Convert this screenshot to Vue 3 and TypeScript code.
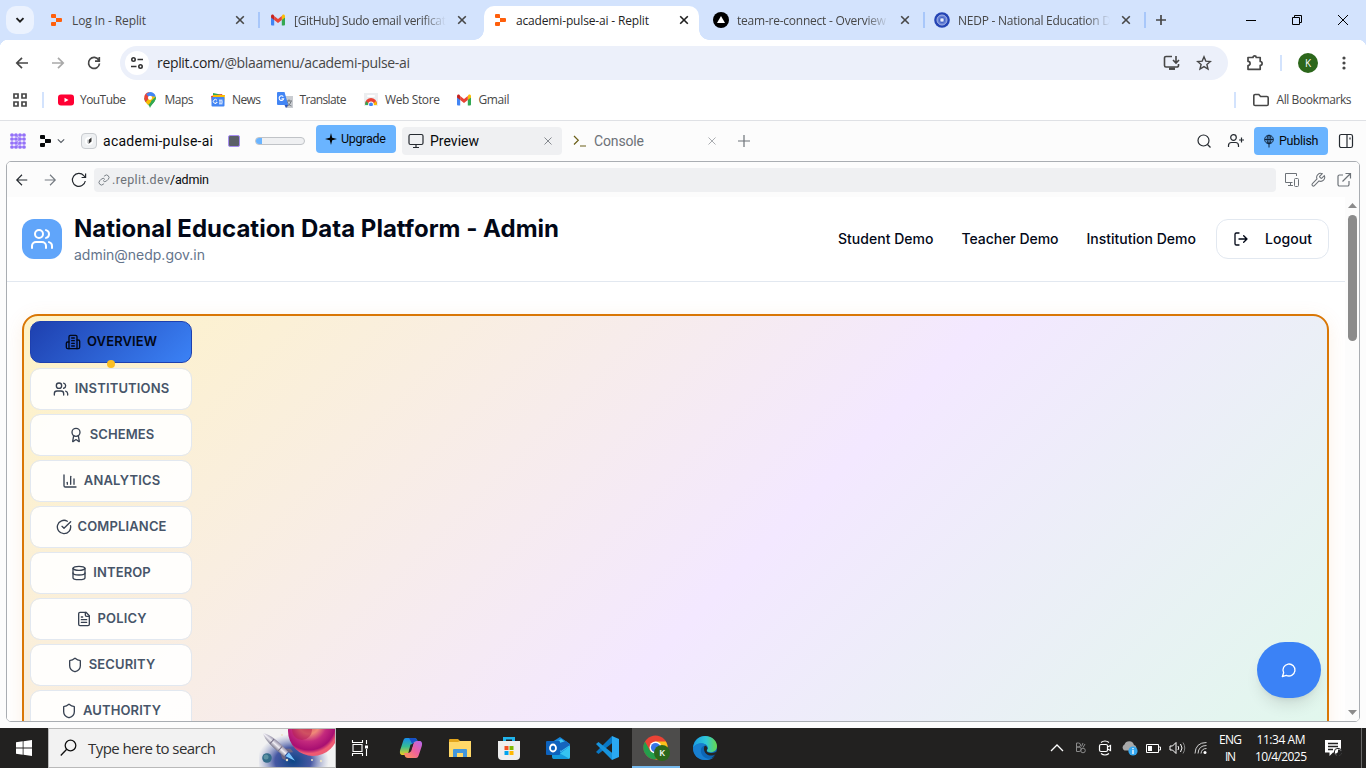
<script setup lang="ts">
import type { Directive } from 'vue'

// Tracks a label out (or in) so that its glyph run spans the given width.
const vFit: Directive<HTMLElement, number> = {
  mounted(el, binding) {
    const count = (el.textContent ?? '').trim().length
    const natural = el.getBoundingClientRect().width
    const spacing = (binding.value - natural) / (count - 1)
    el.style.letterSpacing = `${spacing}px`
    el.style.marginRight = `${-spacing}px`
  },
}

interface Tab { title: string; width: number; icon: string; active?: boolean; separator?: boolean; faded?: boolean }
const tabs: Tab[] = [
  { title: 'Log In - Replit', width: 74, icon: 'replit', separator: true },
  { title: '[GitHub] Sudo email verificat', width: 152, icon: 'gmail', faded: true },
  { title: 'academi-pulse-ai - Replit', width: 133, icon: 'replit', active: true },
  { title: 'team-re-connect - Overview', width: 149, icon: 'vercel', separator: true, faded: true },
  { title: 'NEDP - National Education D', width: 153, icon: 'nedp', separator: true, faded: true },
]

interface Bookmark { label: string; width: number; icon: string }
const bookmarks: Bookmark[] = [
  { label: 'YouTube', width: 46, icon: 'youtube' },
  { label: 'Maps', width: 29, icon: 'maps' },
  { label: 'News', width: 29, icon: 'news' },
  { label: 'Translate', width: 47, icon: 'translate' },
  { label: 'Web Store', width: 55, icon: 'store' },
  { label: 'Gmail', width: 31, icon: 'gmail' },
]

const users = [
  'M16 21v-2a4 4 0 0 0-4-4H6a4 4 0 0 0-4 4v2',
  'M22 21v-2a4 4 0 0 0-3-3.87',
  'M16 3.13a4 4 0 0 1 0 7.75',
  'M13 7a4 4 0 1 1-8 0a4 4 0 1 1 8 0',
]
const shield = [
  'M20 13c0 5-3.5 7.5-7.66 8.95a1 1 0 0 1-.67-.01C7.5 20.5 4 18 4 13V6a1 1 0 0 1 1-1c2 0 4.5-1.2 6.24-2.72a1.17 1.17 0 0 1 1.52 0C14.51 3.81 17 5 19 5a1 1 0 0 1 1 1z',
]

interface NavItem { label: string; width: number; paths: string[]; active?: boolean }
const navItems: NavItem[] = [
  {
    label: 'OVERVIEW', width: 70, active: true,
    paths: ['M6 22V4a2 2 0 0 1 2-2h8a2 2 0 0 1 2 2v18Z', 'M6 12H4a2 2 0 0 0-2 2v6a2 2 0 0 0 2 2h2', 'M18 9h2a2 2 0 0 1 2 2v9a2 2 0 0 1-2 2h-2', 'M10 6h4', 'M10 10h4', 'M10 14h4', 'M10 18h4'],
  },
  { label: 'INSTITUTIONS', width: 94.5, paths: users },
  {
    label: 'SCHEMES', width: 64.5,
    paths: ['m15.477 12.89 1.515 8.526a.5.5 0 0 1-.81.47l-3.58-2.687a1 1 0 0 0-1.197 0l-3.586 2.686a.5.5 0 0 1-.81-.469l1.514-8.526', 'M18 8a6 6 0 1 1-12 0a6 6 0 1 1 12 0'],
  },
  { label: 'ANALYTICS', width: 76.5, paths: ['M3 3v16a2 2 0 0 0 2 2h16', 'M18 17V9', 'M13 17V5', 'M8 17v-3'] },
  { label: 'COMPLIANCE', width: 89, paths: ['M21.801 10A10 10 0 1 1 17 3.335', 'm9 11 3 3L22 4'] },
  { label: 'INTEROP', width: 57.5, paths: ['M21 5a9 3 0 1 1-18 0a9 3 0 1 1 18 0', 'M3 5V19A9 3 0 0 0 21 19V5', 'M3 12A9 3 0 0 0 21 12'] },
  { label: 'POLICY', width: 49, paths: ['M15 2H6a2 2 0 0 0-2 2v16a2 2 0 0 0 2 2h12a2 2 0 0 0 2-2V7Z', 'M14 2v4a2 2 0 0 0 2 2h4', 'M10 9H8', 'M16 13H8', 'M16 17H8'] },
  { label: 'SECURITY', width: 66.5, paths: shield },
  { label: 'AUTHORITY', width: 78, paths: shield },
]

const demoLinks = [
  { label: 'Student Demo', width: 95.5 },
  { label: 'Teacher Demo', width: 97 },
  { label: 'Institution Demo', width: 109.5 },
]

const waffle = [0, 1, 2, 3].flatMap(row => [0, 1, 2, 3].map(col => ({ x: 2 + col * 4, y: 2 + row * 4 })))
</script>

<template>
  <div class="screen">
    <svg class="defs" width="0" height="0">
      <defs>
        <symbol id="replit" viewBox="0 0 16 16">
          <path d="M4 2h3a1 1 0 0 1 1 1v3H4a1 1 0 0 1-1-1V3a1 1 0 0 1 1-1zM8 6h5a1 1 0 0 1 1 1v2a1 1 0 0 1-1 1H8zM4 10h4v3a1 1 0 0 1-1 1H4a1 1 0 0 1-1-1v-2a1 1 0 0 1 1-1z" fill="currentColor" />
        </symbol>
        <symbol id="gmail" viewBox="0 0 16 16">
          <path d="M1 5v7.5a1 1 0 0 0 1 1h2.2V7z" fill="#4285f4" />
          <path d="M15 5v7.5a1 1 0 0 1-1 1h-2.2V7z" fill="#34a853" />
          <path d="M11.8 4v4L15 5.600V4.300c0-1.500-1.500-2.200-2.600-1.300z" fill="#fbbc04" />
          <path d="M4.200 8V4L8 6.900 11.800 4v4L8 10.900z" fill="#ea4335" />
          <path d="M1 4.300v1.300L4.200 8V4l-.6-1C2.500 2.100 1 2.800 1 4.300z" fill="#c5221f" />
        </symbol>
        <symbol id="vercel" viewBox="0 0 16 16">
          <circle cx="8" cy="8" r="8" /><path d="M8 4l4 7H4z" fill="#fff" />
        </symbol>
        <symbol id="nedp" viewBox="0 0 16 16">
          <circle cx="8" cy="8" r="7.800" fill="#2444b4" /><circle cx="8" cy="8" r="5" fill="#6680d6" stroke="#a6b5e6" />
          <circle cx="8" cy="8" r="2.700" fill="#a9b8e8" stroke="#4363c4" /><circle cx="8" cy="8" r="1" fill="#fff" />
        </symbol>
        <symbol id="youtube" viewBox="0 0 16 16">
          <rect y="2.500" width="16" height="11" rx="3" fill="#ff0033" /><path d="M6.500 5.700v4.600L10.500 8z" fill="#fff" />
        </symbol>
        <symbol id="maps" viewBox="0 0 16 16">
          <path d="M8 16c-.7-3.500-5.800-5.500-5.800-10.200L8 5.600l5.700-1.200c1 4.900-4.500 7.600-5.700 11.600z" fill="#34a853" />
          <path d="M2.300 6C2.200 2.500 4.700.2 7.500 0L8 5.500l-4.400 4.700C2.800 8.900 2.300 7.600 2.300 6z" fill="#ea4335" />
          <path d="M8 0c2.800 0 5.100 1.800 5.700 4.400L8 6 4 2z" fill="#4285f4" />
          <path d="M3.600 10.200L9 4l4.500 1L6.300 13z" fill="#fbbc04" />
          <path d="M9 9l4.800-4.300c.7 4-3.500 6.800-5 9.300z" fill="#34a853" />
          <circle cx="8" cy="5.800" r="2.100" fill="#fff" />
        </symbol>
        <symbol id="news" viewBox="0 0 16 16">
          <path d="M3 1l10 2-1 6H3z" fill="#34a853" /><path d="M1 4l11-2 2 8H2z" fill="#ea4335" /><path d="M3 3h12l-1 8H3z" fill="#fbbc04" />
          <rect x="1.500" y="5" width="13" height="9.500" rx="1" fill="#4285f4" />
          <path d="M7 8.300a2 2 0 1 0 .2 2H5.700M9 8.200h3.500M9 10h4M9 11.800h3.500" fill="none" stroke="#fff" stroke-width="1" />
        </symbol>
        <symbol id="translate" viewBox="0 0 16 16">
          <path d="M6 4h10v12H9z" fill="#c9ccd1" /><path d="M9 9h6M12 7.500V9M10 9.500c1 3 3 4 4.500 4.500M14 9.500c-.8 2.500-2 3.700-4 4.700" stroke="#6a7076" fill="none" />
          <path d="M1 0h6.500l3.700 13H1a1 1 0 0 1-1-1V1a1 1 0 0 1 1-1z" fill="#4285f4" /><path d="M7.500 13h3.700L9 16z" fill="#3154b4" />
          <path d="M6.300 4.700a2.300 2.300 0 1 0 .4 2H4.500" stroke="#fff" fill="none" stroke-width="1.100" />
        </symbol>
        <symbol id="store" viewBox="0 0 16 16">
          <path d="M1 1h14v14H1z" fill="#eceef0" /><path d="M5 4h6" stroke="#fff" stroke-width="2" stroke-linecap="round" />
          <path d="M2 12a6 6 0 0 1 12 0z" fill="#ea4335" /><path d="M2 13l1-4 4 4z" fill="#34a853" /><path d="M14 13l-1-4-4 4z" fill="#fbbc04" />
          <circle cx="8" cy="12.300" r="2.800" fill="#fff" /><circle cx="8" cy="12.500" r="2" fill="#4285f4" /><path d="M1 14h14v2H1z" fill="#fff" />
        </symbol>
        <symbol id="close" viewBox="0 0 16 16"><path d="M4.200 4.200l7.600 7.600M11.800 4.200l-7.600 7.600" stroke="currentColor" stroke-width="1.600" /></symbol>
        <symbol id="thin-close" viewBox="0 0 16 16"><path d="M4.500 4.500l7 7M11.500 4.500l-7 7" stroke="currentColor" /></symbol>
        <symbol id="arrow-left" viewBox="0 0 16 16"><path d="M14 8H3M8 2.800L2.800 8 8 13.200" fill="none" stroke="currentColor" stroke-width="1.700" /></symbol>
        <symbol id="arrow-right" viewBox="0 0 16 16"><path d="M2 8h11M8 2.800L13.200 8 8 13.200" fill="none" stroke="currentColor" stroke-width="1.700" /></symbol>
        <symbol id="reload" viewBox="0 0 16 16"><path d="M12.800 5.200A5.500 5.500 0 1 0 13.500 8.500M13.300 2v4.200H9" fill="none" stroke="currentColor" stroke-width="1.700" /></symbol>
      </defs>
    </svg>

    <header class="tabstrip">
      <button class="tab-search"><svg width="10" height="10" viewBox="0 0 10 10"><path d="M1.500 3.200L5 6.700l3.500-3.500" fill="none" stroke="#1f1f1f" stroke-width="1.900" /></svg></button>
      <div v-for="tab in tabs" :key="tab.title" class="tab" :class="{ active: tab.active }">
        <svg class="tab-icon" width="16" height="16"><use :href="`#${tab.icon}`" /></svg>
        <div class="tab-title" :class="{ faded: tab.faded }"><span v-fit="tab.width">{{ tab.title }}</span></div>
        <svg class="tab-close" width="16" height="16"><use href="#close" /></svg>
        <i v-if="tab.separator" class="tab-separator"></i>
      </div>
      <svg class="new-tab" width="16" height="16" viewBox="0 0 16 16"><path d="M8 3v10M3 8h10" stroke="#474747" stroke-width="1.700" /></svg>
      <div class="window-controls">
        <svg width="46" height="40"><path d="M18 20.500h10" stroke="#000" /></svg>
        <svg width="46" height="40"><path d="M18.500 17.500h7v7h-7zM20.500 17.500v-2h7v7h-2" fill="none" stroke="#000" /></svg>
        <svg width="46" height="40"><path d="M18 15l10 10M28 15L18 25" stroke="#000" /></svg>
      </div>
    </header>

    <div class="toolbar">
      <svg class="tool" width="16" height="16"><use href="#arrow-left" /></svg>
      <svg class="tool muted" width="16" height="16"><use href="#arrow-right" /></svg>
      <svg class="tool" width="16" height="16"><use href="#reload" /></svg>
      <div class="omnibox">
        <span class="site-info">
          <svg width="16" height="16" viewBox="0 0 16 16" fill="none" stroke="#333" stroke-width="1.600"><circle cx="4.500" cy="4.500" r="1.700" /><path d="M8.500 4.500H14M2 11.500h5.500" /><circle cx="11.500" cy="11.500" r="1.700" /></svg>
        </span>
        <span v-fit="253" class="url"><b>replit.com</b>/@blaamenu/academi-pulse-ai</span>
        <svg class="install" width="18" height="16" viewBox="0 0 18 16" fill="none" stroke="#474747" stroke-width="1.600"><path d="M9 1.500H3a1.500 1.500 0 0 0-1.500 1.500v7.500A1.500 1.500 0 0 0 3 12h11a1.500 1.500 0 0 0 1.500-1.500V9M13 1v6.500M10 5l3 3 3-3" /><path d="M6 13.700h6" stroke-width="2.500" /></svg>
        <svg class="star" width="16" height="16" viewBox="0 0 16 16"><path d="M8 1.800l1.800 4.300 4.600.4-3.500 3 1.100 4.600-4-2.500-4 2.500 1.100-4.600-3.500-3 4.600-.4z" fill="none" stroke="#474747" stroke-width="1.400" /></svg>
      </div>
      <svg class="extensions" width="18" height="18" viewBox="0 0 18 18"><path d="M2 3.500h5a1.600 1.600 0 0 1 3.200 0h4v4a1.900 1.900 0 0 1 0 3.800v4H2v-3.800a2.100 2.100 0 0 0 0-4.200z" fill="none" stroke="#474747" stroke-width="1.700" stroke-linejoin="round" /></svg>
      <i class="toolbar-separator"></i>
      <span class="avatar">K</span>
      <svg class="kebab" width="4" height="16" viewBox="0 0 4 16" fill="#474747"><circle cx="2" cy="3" r="1.600" /><circle cx="2" cy="8" r="1.600" /><circle cx="2" cy="13" r="1.600" /></svg>
    </div>

    <nav class="bookmarks">
      <svg class="apps" width="16" height="16" viewBox="0 0 16 16" fill="none" stroke="#474747" stroke-width="1.700"><path d="M2 2h4v4H2zM10 2h4v4h-4zM2 10h4v4H2zM10 10h4v4h-4z" /></svg>
      <i class="bookmark-separator"></i>
      <a v-for="mark in bookmarks" :key="mark.label" class="bookmark">
        <svg width="16" height="16"><use :href="`#${mark.icon}`" /></svg><span v-fit="mark.width">{{ mark.label }}</span>
      </a>
      <span class="all-bookmarks">
        <i class="bookmark-separator"></i>
        <svg width="18" height="16" viewBox="0 0 18 16"><path d="M1.800 3.800a1.300 1.300 0 0 1 1.300-1.300h3.700l1.800 2h6.300a1.300 1.300 0 0 1 1.300 1.300v6.400a1.300 1.300 0 0 1-1.300 1.300H3.100a1.300 1.300 0 0 1-1.300-1.300z" fill="none" stroke="#474747" stroke-width="1.600" /></svg>
        <span v-fit="75">All Bookmarks</span>
      </span>
    </nav>

    <section class="workspace">
      <header class="workspace-bar">
        <svg class="waffle" width="16" height="16" viewBox="0 0 16 16">
          <path d="M2 2l4 0 4 4-4 4-4 0M2 6h4M2 14h4l4-4M10 2h4M10 6h4M10 14l4 0" stroke="#b39cfb" stroke-width="1.200" fill="none" />
          <circle v-for="dot in waffle" :key="`${dot.x}-${dot.y}`" :cx="dot.x" :cy="dot.y" r="1.850" fill="#9471f8" />
        </svg>
        <svg class="brand" width="16" height="16"><use href="#replit" /></svg>
        <svg class="brand-caret" width="8" height="8" viewBox="0 0 8 8"><path d="M.8 2.300L4 5.500l3.200-3.200" fill="none" stroke="#555b63" stroke-width="1.100" /></svg>
        <span class="project-icon"><svg width="10" height="10" viewBox="0 0 10 10"><circle cx="5" cy="5" r="4" fill="#fff" /><path d="M7.500 1.500v4L4.500 8V4z" fill="#333" /><path d="M3 3.500l1.500.5v4L3 6.500z" fill="#d0d3d6" /></svg></span>
        <span v-fit="110" class="bar-label">academi-pulse-ai</span>
        <i class="stop"></i>
        <i class="meter"><i></i></i>
        <button class="upgrade"><svg width="12" height="12" viewBox="0 0 12 12"><path d="M6 0L7.200 4.800 12 6 7.200 7.200 6 12 4.800 7.200 0 6l4.800-1.200z" /></svg><span v-fit="45" class="bar-label">Upgrade</span></button>
        <div class="pane-tab selected">
          <svg width="16" height="16" viewBox="0 0 16 16" fill="none" stroke="#252a30" stroke-width="1.200"><rect x="1" y="1.500" width="14" height="10" rx="1.500" /><path d="M8 11.500v3M5 14.500h6" /></svg>
          <span v-fit="49" class="bar-label">Preview</span>
          <svg class="pane-close" width="16" height="16"><use href="#thin-close" /></svg>
        </div>
        <div class="pane-tab">
          <svg width="16" height="16" viewBox="0 0 16 16" fill="none" stroke="#6b5f18" stroke-width="1.200"><path d="M2 3l4.300 4.300L2 11.500M8 13h6" /></svg>
          <span v-fit="50" class="bar-label">Console</span>
          <svg class="pane-close faint" width="16" height="16"><use href="#thin-close" /></svg>
        </div>
        <svg class="add-pane" width="14" height="14" viewBox="0 0 14 14"><path d="M7 1v12M1 7h12" stroke="#6d7278" stroke-width="1.200" /></svg>
        <div class="workspace-actions">
          <svg class="find" width="16" height="16" viewBox="0 0 16 16" fill="none" stroke="#252a30" stroke-width="1.200"><circle cx="7.500" cy="7.500" r="5.500" /><path d="M11.500 11.500l3 3" /></svg>
          <svg class="invite" width="18" height="16" viewBox="0 0 18 16" fill="none" stroke="#252a30" stroke-width="1.200"><circle cx="6.500" cy="4.500" r="2.800" /><path d="M1.500 14v-1.500a3 3 0 0 1 3-3h4a3 3 0 0 1 3 3V14M14.500 4.500v5M12 7h5" /></svg>
          <button class="publish">
            <svg width="12" height="14" viewBox="0 0 12 14" fill="none" stroke="#10253d"><circle cx="6" cy="5.500" r="4.300" /><ellipse cx="6" cy="5.500" rx="2" ry="4.300" /><path d="M1.700 5.500h8.600M6 1v12.500M4.500 9h3" /></svg>
            <span v-fit="39.500" class="bar-label">Publish</span>
          </button>
          <svg width="16" height="16" viewBox="0 0 16 16" fill="none" stroke="#252a30" stroke-width="1.200"><rect x="1.500" y="1.500" width="13" height="13" rx="1.800" /><path d="M9 1.500v13M12 4.500v2" /></svg>
        </div>
      </header>

      <div class="webview">
        <div class="webview-bar">
          <svg class="nav-icon" width="14" height="14" viewBox="0 0 16 16"><path d="M14 8H2.500M8 2L2 8l6 6" fill="none" stroke="#252a30" stroke-width="1.300" /></svg>
          <svg class="nav-icon" width="14" height="14" viewBox="0 0 16 16"><path d="M2 8h11.500M8 2l6 6-6 6" fill="none" stroke="#747a81" stroke-width="1.300" /></svg>
          <svg class="nav-icon" width="16" height="16" viewBox="0 0 16 16"><path d="M14.300 9A6.500 6.500 0 1 1 12.800 3.600l1.700 1.800M14.600 1.500v4h-4" fill="none" stroke="#252a30" stroke-width="1.200" /></svg>
          <div class="webview-address">
            <svg width="12" height="12" viewBox="0 0 24 24" fill="none" stroke="#7a8087" stroke-width="2"><path d="M10 13a5 5 0 0 0 7.540.54l3-3a5 5 0 0 0-7.070-7.070l-1.720 1.710M14 11a5 5 0 0 0-7.540-.54l-3 3a5 5 0 0 0 7.070 7.070l1.710-1.710" /></svg>
            <span v-fit="58" class="bar-label host">.replit.dev</span><span v-fit="39" class="bar-label">/admin</span>
          </div>
          <svg width="16" height="16" viewBox="0 0 16 16" fill="none" stroke="#6d7278"><path d="M8.500 10.500h-7v-9h11V4M4 13.500h5M6.500 10.500v3" /><rect x="10.500" y="6.500" width="4" height="8" rx="1" /></svg>
          <svg width="16" height="16" viewBox="0 0 24 24" fill="none" stroke="#6d7278" stroke-width="1.600"><path d="M14.700 6.300a1 1 0 0 0 0 1.400l1.600 1.600a1 1 0 0 0 1.400 0l3.770-3.770a6 6 0 0 1-7.940 7.940l-6.910 6.910a2.120 2.120 0 0 1-3-3l6.910-6.910a6 6 0 0 1 7.940-7.940z" /></svg>
          <svg width="16" height="16" viewBox="0 0 16 16" fill="none" stroke="#6d7278" stroke-width="1.200"><path d="M7 3H3.500A1.500 1.500 0 0 0 2 4.500v8A1.500 1.500 0 0 0 3.500 14h8a1.500 1.500 0 0 0 1.500-1.500V9M9.500 1.500h5v5M14.500 1.500L6.500 9.500" /></svg>
        </div>

        <div class="viewport">
          <main class="page">
            <header class="page-header">
              <span class="logo"><svg class="line" width="24" height="24" viewBox="0 0 24 24"><path v-for="d in users" :key="d" :d="d" /></svg></span>
              <div class="heading">
                <h1><span v-fit="485">National Education Data Platform - Admin</span></h1>
                <p><span v-fit="131">admin@nedp.gov.in</span></p>
              </div>
              <nav class="demo-links"><a v-for="link in demoLinks" :key="link.label"><span v-fit="link.width">{{ link.label }}</span></a></nav>
              <button class="logout">
                <svg class="line" width="16" height="16" viewBox="0 0 24 24"><path d="M9 21H5a2 2 0 0 1-2-2V5a2 2 0 0 1 2-2h4M16 17l5-5-5-5M21 12H9" /></svg>
                <span v-fit="47">Logout</span>
              </button>
            </header>
            <div class="board">
              <div class="board-nav">
                <button v-for="item in navItems" :key="item.label" class="nav-item" :class="{ current: item.active }">
                  <svg class="line" width="16" height="16" viewBox="0 0 24 24"><path v-for="d in item.paths" :key="d" :d="d" /></svg>
                  <span v-fit="item.width">{{ item.label }}</span>
                </button>
              </div>
            </div>
          </main>
          <aside class="scrollbar">
            <svg width="9" height="5" viewBox="0 0 9 5"><path d="M4.500 0L9 5H0z" fill="#8b8b8b" /></svg>
            <i class="thumb"></i>
            <svg width="9" height="5" viewBox="0 0 9 5"><path d="M4.500 5L9 0H0z" fill="#8b8b8b" /></svg>
          </aside>
          <button class="chat"><svg class="line" width="16" height="16" viewBox="0 0 24 24"><path d="M7.900 20A9 9 0 1 0 4 16.100L2 22Z" /></svg></button>
        </div>
      </div>
    </section>

    <footer class="taskbar">
      <div class="start"><svg width="16" height="16" viewBox="0 0 16 16" fill="#fff"><path d="M0 2.300L6.700 1.300v6.300H0zM7.500 1.200L16 0v7.600H7.500zM0 8.400h6.700v6.300L0 13.700zM7.500 8.400H16V16l-8.500-1.200z" /></svg></div>
      <div class="search">
        <svg class="search-icon" width="17" height="18" viewBox="0 0 17 18"><circle cx="10.500" cy="6.500" r="5.300" fill="none" stroke="#111" stroke-width="1.300" /><path d="M6.700 10.300L.8 16.500" stroke="#111" stroke-width="1.300" /></svg>
        <span v-fit="128">Type here to search</span>
        <svg class="space-art" width="76" height="38" viewBox="0 0 76 38">
          <defs>
            <radialGradient id="nebula"><stop offset="0" stop-color="#0c4585" /><stop offset=".5" stop-color="#33479a" stop-opacity=".9" /><stop offset="1" stop-color="#8791c4" stop-opacity="0" /></radialGradient>
            <radialGradient id="planet" cx=".42" cy=".35" r=".6"><stop offset="0" stop-color="#d6455a" /><stop offset=".35" stop-color="#f08a78" /><stop offset=".6" stop-color="#c42a7d" /><stop offset=".88" stop-color="#a80f72" /><stop offset="1" stop-color="#ee5a72" /></radialGradient>
            <linearGradient id="hull" x1="0" x2="1"><stop offset="0" stop-color="#777487" /><stop offset=".5" stop-color="#f0eef5" /><stop offset="1" stop-color="#8c879f" /></linearGradient>
          </defs>
          <ellipse cx="34" cy="32" rx="36" ry="27" fill="url(#nebula)" />
          <circle cx="54" cy="2" r="25" fill="url(#planet)" /><circle cx="43" cy="1" r="10" fill="#b52350" opacity=".55" />
          <g transform="translate(16 15) rotate(-48)">
            <path d="M-3 10L-6 15l1 4 3-3zM3 10l4 5-1 4-3-3z" fill="#6f6884" />
            <path d="M0-16c4 5 4.500 18 3 31h-6c-1.500-13-1-26 3-31z" fill="url(#hull)" /><path d="M-3-4h6M-3 7h6" stroke="#777087" />
            <path d="M-2 16h5L1 26z" fill="#79c6ff" />
          </g>
          <circle cx="8" cy="29" r="4.800" fill="#326b89" /><circle cx="7" cy="28" r="2.500" fill="#5c91a2" />
          <g fill="#e9e1c7"><circle cx="28" cy="31" r="1.200" /><circle cx="53" cy="31" r="1" /><circle cx="62" cy="32" r="1.200" /><circle cx="23" cy="6" r="1" /></g>
        </svg>
      </div>
      <div class="task task-view"><svg width="18" height="16" viewBox="0 0 18 16" fill="none" stroke="#fff" stroke-width="1.100"><path d="M2 4.500h9v7H2zM1.500 0v2.500h10V0M1.500 16v-2.500h10V16M15.500 0v4M15.500 9v7" /><path d="M14 5.500h3v3h-3z" fill="#fff" stroke="none" /></svg></div>
      <div class="task">
        <svg width="24" height="24" viewBox="0 0 24 24">
          <defs><linearGradient id="cop-a" x1="0" y1="0" x2="0" y2="1"><stop stop-color="#188bee" /><stop offset=".5" stop-color="#35bd93" /><stop offset="1" stop-color="#efce20" /></linearGradient><linearGradient id="cop-b" x1="1" y1="0" x2="0" y2="1"><stop stop-color="#b467ef" /><stop offset=".5" stop-color="#ef619b" /><stop offset="1" stop-color="#ff9951" /></linearGradient></defs>
          <path d="M7 2h8c2 0 3 1 3.500 3l.5 2h-4c-2 0-3 2-3.500 4L10 15c-1 3-2 4-4 4H4c-3 0-3.500-2-2.800-5L4 5.500C4.700 3 5.500 2 7 2z" fill="url(#cop-a)" />
          <path d="M17 22H9c-2 0-3-1-3.500-3L5 17h4c2 0 3-2 3.500-4L14 9c1-3 2-4 4-4h2c3 0 3.500 2 2.800 5L20 18.500c-.7 2.500-1.500 3.500-3 3.500z" fill="url(#cop-b)" />
          <path d="M10 2h5c2 0 3 1 3.500 3h-1c-2 0-2.700 1-3.500 2.500C13 9 12 5 10 2z" fill="#1750c7" /><path d="M11.500 8.500h2.500l-2 7H9.700z" fill="#252525" />
        </svg>
      </div>
      <div class="task">
        <svg width="24" height="24" viewBox="0 0 24 24"><path d="M2 3h8l2 2h9a1 1 0 0 1 1 1v14H1V4a1 1 0 0 1 1-1z" fill="#e3a51c" /><path d="M1 6h9l2-1h11v16H1z" fill="#ffd868" /><path d="M5 21v-7a1 1 0 0 1 1-1h12a1 1 0 0 1 1 1v7h-4v-4H9v4z" fill="#4297dc" /></svg>
      </div>
      <div class="task">
        <svg width="24" height="24" viewBox="0 0 24 24"><path d="M7 7V2h10v5" fill="none" stroke="#20b5ed" stroke-width="2" /><path d="M1 5h22v15a4 4 0 0 1-4 4H5a4 4 0 0 1-4-4z" fill="#eee" /><path d="M7.500 10h4v4h-4z" fill="#f25022" /><path d="M12.500 10h4v4h-4z" fill="#7fba00" /><path d="M7.500 15h4v4h-4z" fill="#00a4ef" /><path d="M12.500 15h4v4h-4z" fill="#ffb900" /><path d="M8 5V2.500h8V5" fill="none" stroke="#20b5ed" stroke-width="2" /></svg>
      </div>
      <div class="task">
        <svg width="24" height="24" viewBox="0 0 24 24"><path d="M3 8l11-7 10 7v13a2 2 0 0 1-2 2H8z" fill="#1687dc" /><path d="M7 9l8-6 9 7-9 6z" fill="#42c8f5" /><path d="M7 9l13-4 4 4-9 6z" fill="#1565bd" /><path d="M24 10v11a2 2 0 0 1-2 2H7z" fill="#35c4f1" /><path d="M6 13l17 9.500-1 .5H8a2 2 0 0 1-2-2z" fill="#1399dc" /><rect y="5" width="14" height="14" rx="1" fill="#0d62bd" /><ellipse cx="7" cy="12" rx="3" ry="3.500" fill="none" stroke="#fff" stroke-width="1.800" /></svg>
      </div>
      <div class="task">
        <svg width="24" height="24" viewBox="0 0 24 24"><path d="M1 16L17 0l1.500 6L3.500 18z" fill="#0877c4" /><path d="M1 8l16 16 1.500-6L3.500 6z" fill="#1794dd" /><path d="M17 0l7 3v18l-7 3z" fill="#2aa9f2" /></svg>
      </div>
      <div class="task open">
        <svg width="26" height="26" viewBox="0 0 26 26"><circle cx="12.500" cy="12.500" r="12" fill="#ea4335" /><path d="M2 6.500a12 12 0 0 0 10.500 18l5-8-10 0z" fill="#249e4c" /><path d="M12.500 6.500h10.400a12 12 0 0 1-10.400 18l5.500-9z" fill="#fbc21b" /><circle cx="12.500" cy="12.500" r="6" fill="#fff" /><circle cx="12.500" cy="12.500" r="4.600" fill="#3675e8" /></svg>
        <span class="profile-badge">K</span>
      </div>
      <div class="task">
        <svg width="24" height="24" viewBox="0 0 24 24"><defs><linearGradient id="edge-a"><stop stop-color="#1b9de2" /><stop offset=".55" stop-color="#30c8d8" /><stop offset="1" stop-color="#68d84a" /></linearGradient></defs><circle cx="12" cy="12" r="12" fill="#0c66b6" /><path d="M0 12C1 4 6 0 12 0c8 0 12 6 12 10 0 5-4 7-8 6-3-.5-2-2-1-3.500C15 7 5 5 0 12z" fill="url(#edge-a)" /><path d="M0 12c3-6 11-6 14-2-7-2-8 7-3 11 4 3 8 2 11-1-3 4-7 4-10 4C5 24 0 19 0 12z" fill="#187fd0" /><path d="M12 9.500c2 1 3 2.500 2 4-1 2 0 3 3 3.500 3 0 5-.5 6.500-1.500.5.500.5 1.500-.5 2.500-3 2-7 2-9.500 0-2.500-2-3.500-6-1.500-8.500z" fill="#252525" /></svg>
      </div>
      <div class="tray">
        <span class="tray-icon"><svg width="14" height="8" viewBox="0 0 14 8"><path d="M1 7l6-6 6 6" fill="none" stroke="#fff" stroke-width="1.300" /></svg></span>
        <span class="tray-icon"><svg width="12" height="13" viewBox="0 0 12 13" fill="none" stroke="#8b8b8b"><path d="M1.500 1h2a1.500 1.500 0 0 1 0 4h-2zM1.500 5h2.500a1.800 1.800 0 0 1 0 4.500H1.500zM8 1L6.500 4.500M10 2L8 5.500" /><circle cx="8" cy="8.500" r="2.300" /></svg></span>
        <span class="tray-icon"><svg width="14" height="16" viewBox="0 0 14 16" fill="none" stroke="#fff" stroke-width="1.200"><rect x="1.500" y="4.500" width="8" height="7" rx="1.500" /><path d="M9.500 7l3-1.500v5L9.500 9M3 2.500Q7-.5 11 2.500M3 13.500q4 3 8 0" /></svg></span>
        <span class="tray-icon"><svg width="17" height="15" viewBox="0 0 17 15"><path d="M3.500 9.500a3.300 3.300 0 0 1 0-6A5 5 0 0 1 13 4a3 3 0 0 1 1 5.500z" fill="#a8a8a8" /><circle cx="12" cy="10" r="4.600" fill="#35a8f0" /><path d="M12 9v4M12 7v1.200" stroke="#fff" stroke-width="1.300" /></svg></span>
        <span class="tray-icon"><svg width="15" height="9" viewBox="0 0 15 9"><path d="M.5.5h12v8H.5zM12.500 3h2v3h-2" fill="none" stroke="#fff" /><path d="M2 2h4v5H2z" fill="#fff" /></svg></span>
        <span class="tray-icon"><svg width="17" height="14" viewBox="0 0 17 14" fill="none" stroke="#fff"><path d="M1 5h2.500L7 1.500v11L3.500 9H1zM9 5q1.500 2 0 4M11.500 3q3 4 0 8" /><path d="M14 1.500q3.500 5.500 0 11" stroke="#888" /></svg></span>
        <span class="tray-icon"><svg width="14" height="14" viewBox="0 0 14 14" fill="none" stroke="#d0d0d0"><path d="M1 12.500Q1.500 1.500 12.500 1.500M4 12.500Q4.500 4.500 12.500 4.500M7 12.500Q7.500 7.500 12.500 7.500" /><circle cx="11" cy="11.500" r="1.500" fill="#fff" stroke="none" /></svg></span>
        <span class="lang"><span v-fit="23">ENG</span><span v-fit="11">IN</span></span>
        <span class="clock"><span v-fit="49">11:34 AM</span><span v-fit="52">10/4/2025</span></span>
        <span class="notices"><svg width="17" height="17" viewBox="0 0 17 17"><path d="M0 0h16v12.500H8L4.500 16v-3.500H0z" fill="#fff" /><path d="M3 3.500h10M3 6.500h10M3 9.500h5" stroke="#222" stroke-width="1.300" /><circle cx="13" cy="12" r="3.700" fill="#fff" stroke="#222" /><path d="M13 9.500a3 3 0 1 1-2.500 4q3 0 2.500-4z" fill="#222" /></svg></span>
      </div>
    </footer>
  </div>
</template>

<style>
body { margin: 0; overflow: hidden; }
</style>

<style scoped>
.screen { width: 1366px; height: 768px; display: flex; flex-direction: column; overflow: hidden; background: #fcfcfc; font-family: "Open Sans", "Noto Sans", sans-serif; }
.screen *, .screen { box-sizing: border-box; }
.defs { position: absolute; }
svg { display: block; flex: none; }
button { border: 0; padding: 0; margin: 0; font: inherit; color: inherit; flex: none; }
span { white-space: nowrap; }
.line { fill: none; stroke: currentColor; stroke-width: 2; stroke-linecap: round; stroke-linejoin: round; }

.tabstrip { height: 40px; flex: none; display: flex; align-items: center; background: #d3e3fd; }
.tab-search { width: 28px; height: 28px; margin: 0 6px; border-radius: 10px; background: #ebf2fe; display: grid; place-items: center; }
.tab { width: 222px; height: 40px; flex: none; display: flex; align-items: center; padding-left: 8px; font-size: 12px; color: #474747; }
.active ~ .tab { width: 221px; }
.tab-icon { color: #ff5f0b; }
.tab-title { width: 160px; margin-left: 8px; padding-top: 2px; overflow: hidden; flex: none; line-height: 20px; }
.tab-title span { display: inline-block; }
.faded { -webkit-mask-image: linear-gradient(90deg, #000 128px, transparent 152px); mask-image: linear-gradient(90deg, #000 128px, transparent 152px); }
.tab-separator { width: 2px; height: 16px; margin-left: 10px; background: #a8c7fa; }
.active { position: relative; width: 215px; height: 34px; margin: 6px 6px 0 0; padding-bottom: 6px; border-radius: 10px 10px 0 0; background: #fff; color: #1f1f1f; }
.active::before, .active::after { content: ""; position: absolute; bottom: 0; width: 10px; height: 10px; }
.active::before { right: 100%; background: radial-gradient(circle at 0 0, transparent 9.500px, #fff 10px); }
.active::after { left: 100%; background: radial-gradient(circle at 100% 0, transparent 9.500px, #fff 10px); }
.new-tab { margin-left: 6px; }
.window-controls { display: flex; margin-left: auto; }

.toolbar { height: 40px; flex: none; display: flex; align-items: center; padding: 6px 0 0 14px; color: #474747; background: radial-gradient(circle at 8px 8px, #fff 8px, transparent 8.500px) 0 0 / 8px 8px no-repeat, radial-gradient(circle at 0 8px, #fff 8px, transparent 8.500px) 100% 0 / 8px 8px no-repeat, linear-gradient(#fff, #fff) 8px 0 / 1350px 8px no-repeat, linear-gradient(#fff, #fff) 0 8px / 100% 32px no-repeat, #d3e3fd; }
.tool { margin-right: 20px; }
.tool.muted { color: #a9a9a9; }
.omnibox { width: 1108px; height: 34px; margin-left: -2px; border-radius: 17px; background: #ecf0fa; display: flex; align-items: center; padding-left: 5px; flex: none; }
.site-info { width: 24px; height: 24px; border-radius: 50%; background: #fff; display: grid; place-items: center; margin-right: 8px; }
.url { font-size: 14px; padding-bottom: 1px; color: #474747; }
.url b { font-weight: 400; color: #1f1f1f; }
.install { margin-left: auto; }
.star { margin: 0 16px 0 15px; }
.extensions { margin-left: 18px; }
.toolbar-separator { width: 2px; height: 16px; margin: 0 16px; background: #d3e3fd; }
.avatar { width: 20px; height: 20px; border-radius: 50%; background: #2c671b; color: #fff; font-size: 10px; line-height: 20px; text-align: center; }
.kebab { margin-left: 24px; }

.bookmarks { height: 41px; flex: none; display: flex; align-items: center; padding-left: 12px; border-bottom: 1px solid #dfe1e5; background: #fff; font-size: 12px; color: #474747; }
.bookmark-separator { width: 2px; height: 16px; margin: 0 14px; background: #d3e3fd; }
.bookmark { display: flex; align-items: center; gap: 6px; margin-right: 16.500px; }
.bookmark span, .all-bookmarks span { padding-bottom: 1px; }
.all-bookmarks { display: flex; align-items: center; margin-left: auto; padding-right: 14.500px; }
.all-bookmarks .bookmark-separator { margin-right: 16px; }
.all-bookmarks svg { margin-right: 7px; }

.workspace { height: 607px; flex: none; display: flex; flex-direction: column; padding: 0 6px 6px; font-family: Inter, sans-serif; color: #07090b; }
.workspace-bar { height: 40px; flex: none; display: flex; align-items: center; padding: 0 6px 0 4px; font-size: 14px; }
.bar-label { padding-bottom: 1px; font-family: Roboto, Inter, sans-serif; }
.brand { margin-left: 11px; }
.brand-caret { margin-left: 4px; }
.project-icon { width: 16px; height: 16px; margin: 0 6px 0 16px; border: 1px solid #c9ccd0; border-radius: 4px; background: #eef0f2; display: grid; place-items: center; }
.stop { width: 12px; height: 12px; margin-left: 15px; background: #5b6068; border: 1px solid #a68df0; border-radius: 2px; }
.meter { width: 50px; height: 8px; margin-left: 15px; border: 1px solid #c0c3c7; border-radius: 4px; background: #eff0f2; overflow: hidden; }
.meter i { display: block; width: 6px; height: 6px; background: #6ab4ff; }
.upgrade { width: 80px; height: 28px; margin: -4px 6px 0 11px; border-radius: 4px; background: #6ab4ff; display: flex; align-items: center; padding-left: 9px; gap: 4px; font-size: 12.500px; }
.pane-tab { width: 160px; height: 28px; flex: none; display: flex; align-items: center; padding: 0 6px; gap: 6px; border-radius: 4px; color: #6c7178; margin-right: 4px; }
.selected { background: #eff0f2; color: #07090b; }
.pane-close { margin-left: auto; color: #85898f; }
.faint { color: #aaadb1; }
.add-pane { margin-left: 7px; }
.workspace-actions { display: flex; align-items: center; margin-left: auto; }
.invite { margin: 0 9px 0 15px; }
.publish { width: 74px; height: 28px; margin-right: 10px; border-radius: 4px; background: #6ab4ff; display: flex; align-items: center; gap: 4px; padding-left: 9px; font-size: 12.500px; }

.webview { height: 561px; flex: none; border: 1px solid #a9adb2; border-radius: 5px; overflow: hidden; display: flex; flex-direction: column; }
.webview-bar { height: 35px; flex: none; display: flex; align-items: center; padding: 0 7px 0 8px; gap: 10px; background: #fcfcfc; }
.nav-icon { margin-right: 4px; }
.nav-icon + .nav-icon + .nav-icon { margin-right: -3px; }
.webview-address { flex: 1; height: 24px; border-radius: 4px; background: #eff0f2; display: flex; align-items: center; padding-left: 4px; font-size: 12.500px; margin-right: -2px; }
.host { margin-left: 2px; color: #6d7278; }
.viewport { position: relative; flex: 1; min-height: 0; display: flex; overflow: hidden; background: #fff; }
.page { width: 1338px; height: 773px; flex: none; }
.page-header { height: 85px; display: flex; align-items: center; padding: 0 16px 0 15px; border-bottom: 1px solid #e2e8f0; color: #020817; }
.logo { width: 40px; height: 40px; border-radius: 12px; background: #60a5fa; color: #fff; display: grid; place-items: center; flex: none; }
.heading { margin-left: 12px; }
h1 { margin: 0; font-size: 24px; line-height: 32px; font-weight: 700; }
.heading p { margin: 0; font-size: 14px; line-height: 20px; color: #64748b; }
.demo-links { display: flex; gap: 28px; margin-left: auto; padding-bottom: 2px; font-size: 14px; font-weight: 500; }
.logout { width: 113px; height: 40px; margin-left: 20px; border: 1px solid #e2e8f0; border-radius: 12px; background: #fff; display: flex; align-items: center; gap: 16px; padding-left: 16px; font-size: 14px; font-weight: 500; }
.logout span, .nav-item span { padding-bottom: 2px; }
.board { height: 640px; margin: 32px 16px 0 15px; padding: 5px 6px; border: 2px solid #d97706; border-radius: 16px; background: linear-gradient(135deg, #fef3c7, #f3e8ff 50%, #dcfce7); box-shadow: 0 4px 20px rgba(217, 119, 6, .1); }
.board-nav { width: 162px; display: flex; flex-direction: column; gap: 4px; }
.nav-item { height: 42px; border: 1px solid #e2e8f0; border-radius: 10px; background: rgba(255, 255, 255, .9); background-clip: padding-box; color: #475569; display: flex; align-items: center; justify-content: center; gap: 6px; font-size: 13px; font-weight: 600; }
.nav-item svg { color: #374151; }
.current { position: relative; margin-bottom: 1px; border-color: #1e40af; background: linear-gradient(135deg, #1e40af, #3b82f6); color: #020817; }
.current svg { color: #020817; }
.current::after { content: ""; position: absolute; left: 76px; bottom: -6px; width: 8px; height: 8px; border-radius: 50%; background: #fbbf24; }
.scrollbar { width: 14px; flex: none; display: flex; flex-direction: column; align-items: center; padding: 6px 0; background: #fcfcfc; }
.thumb { width: 9px; height: 126px; margin: 7px 0 auto; border-radius: 5px; background: #8b8b8b; }
.chat { position: absolute; right: 38px; bottom: 23px; width: 64px; height: 56px; border-radius: 28px; background: #3b82f6; color: #fff; display: grid; place-items: center; box-shadow: 0 10px 15px -3px rgba(0, 0, 0, .1), 0 4px 6px -4px rgba(0, 0, 0, .1); }

.taskbar { height: 40px; flex: none; display: flex; align-items: center; background: #222120; color: #fff; }
.start { width: 48px; flex: none; display: grid; place-items: center; }
.search { width: 288px; height: 40px; flex: none; display: flex; align-items: center; padding-left: 11px; border: 1px solid #b9b9b9; background: #f2f2f2; color: #303030; font-size: 15px; overflow: hidden; }
.search-icon { margin-right: 11px; }
.space-art { margin-left: auto; }
.task { position: relative; width: 49px; height: 40px; flex: none; display: grid; place-items: center; }
.task-view { width: 48px; margin-right: 2px; }
.open { width: 48px; margin: 0 0 0 1px; background: #4d4c4b; box-shadow: inset 0 -2px #76b9ed; }
.profile-badge { position: absolute; left: 22px; top: 17px; width: 16px; height: 16px; border-radius: 50%; background: #2c671b; font: 600 9px/16px "Open Sans", sans-serif; text-align: center; }
.tray { display: flex; align-items: center; height: 40px; margin-left: auto; border-right: 1px solid #696969; margin-right: 4px; }
.tray-icon { width: 24px; display: grid; place-items: center; flex: none; }
.lang, .clock { display: flex; flex-direction: column; align-items: center; font-size: 12px; line-height: 17px; flex: none; }
.lang { width: 35px; }
.clock { width: 66px; }
.notices { width: 47px; padding-left: 11px; }
</style>
